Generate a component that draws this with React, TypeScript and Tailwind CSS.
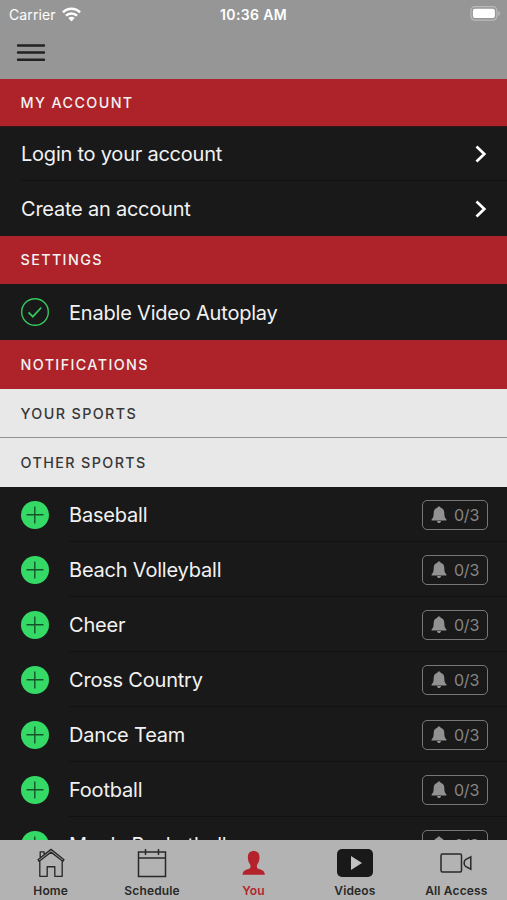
import React from "react";

const sports = [
  "Baseball",
  "Beach Volleyball",
  "Cheer",
  "Cross Country",
  "Dance Team",
  "Football",
  "Men's Basketball",
];

function Chevron() {
  return (
    <svg width="12" height="18" viewBox="0 0 12 18" fill="none" stroke="#fff" strokeWidth="2.7">
      <path d="M1.500 1.500 9.300 9 1.500 16.500" />
    </svg>
  );
}

function Bell() {
  return (
    <svg width="16" height="18" viewBox="0 0 16 18" fill="#929292">
      <path d="M8 .6c.9 0 1.500.5 1.600 1.200 2.400.7 3.700 2.500 3.700 5.200 0 3.700.6 4.900 2.100 6.200v1.300H.6v-1.300c1.500-1.300 2.100-2.500 2.100-6.200 0-2.700 1.300-4.500 3.700-5.200C6.500 1.100 7.100.6 8 .6ZM6 15h4c-.2 1.400-1 2-2 2s-1.800-.6-2-2Z" />
    </svg>
  );
}

function SectionHeader({ title, className }: { title: string; className: string }) {
  return (
    <h2 className={"flex shrink-0 items-center pl-[20.5px] text-[14.3px] font-medium tracking-[1.4px] " + className}>
      {title}
    </h2>
  );
}

function SportRow({ name }: { name: string }) {
  return (
    <div className="flex h-[55px] shrink-0 pl-[21px]">
      <svg className="mt-[14px] shrink-0" width="28" height="28" viewBox="0 0 28 28">
        <circle cx="14" cy="14" r="14" fill="#35da66" />
        <path d="M5.500 13.800h17M13.800 5.500v17" stroke="#15532a" strokeWidth="1.400" />
      </svg>
      <div className="ml-[20px] flex flex-1 items-center border-b border-[#121212] pt-[2px] pr-[19px]">
        <span className="flex-1 text-[20px] tracking-[-0.2px]">{name}</span>
        <span className="flex h-[30px] w-[66px] items-center justify-center gap-[7px] rounded-[5px] border-[1.5px] border-[#777] text-[16px] tracking-[-0.2px] text-[#858585]">
          <Bell />
          0/3
        </span>
      </div>
    </div>
  );
}

function Tab({ label, active, children }: { label: string; active?: boolean; children: React.ReactNode }) {
  return (
    <div className={"flex flex-1 flex-col items-center pt-[7px] " + (active ? "text-[#b4232b]" : "text-[#282828]")}>
      <div className="flex h-[32px] items-center justify-center">{children}</div>
      <span className="mt-[3px] text-[12px] leading-[18px] font-semibold tracking-[0.15px] whitespace-nowrap">{label}</span>
    </div>
  );
}

export default function App() {
  return (
    <div className="flex h-[900px] w-[507px] flex-col overflow-hidden bg-[#191919] font-['Inter','Liberation_Sans',sans-serif] text-[#f2f2f2]">
      <header className="flex h-[79px] shrink-0 flex-col bg-[#969696]">
        <div className="grid h-[28px] grid-cols-3 items-center text-[14px] text-white">
          <div className="flex items-center gap-[6px] pl-[9px]">
            <span className="tracking-[0.1px]">Carrier</span>
            <svg width="19" height="15" viewBox="0 0 19 15" fill="none" stroke="#fff" strokeWidth="2.600">
              <path d="M1 5.300a12 12 0 0 1 17 0M4 8.700a7.800 7.800 0 0 1 11 0" />
              <path d="M6.300 11a4.600 4.600 0 0 1 6.400 0L9.500 14.400Z" fill="#fff" stroke="none" />
            </svg>
          </div>
          <span className="text-center font-semibold tracking-[0.35px]">10:36 AM</span>
          <div className="flex justify-end pr-[6px] pb-[2px]">
            <svg width="31" height="15" viewBox="0 0 31 15">
              <rect x=".9" y=".7" width="26" height="13.400" rx="4" fill="none" stroke="#bababa" strokeWidth="1.300" />
              <rect x="2.900" y="2.700" width="22" height="9.400" rx="2" fill="#fff" />
              <path d="M28.300 5v5c2.300-1 2.300-4 0-5Z" fill="#bababa" />
            </svg>
          </div>
        </div>
        <svg className="mt-[15px] ml-[16px]" width="30" height="20" viewBox="0 0 30 20" stroke="#222" strokeWidth="2.400" strokeLinecap="round">
          <path d="M2 2.500h26M2 9.500h26M2 16.800h26" />
        </svg>
      </header>

      <main className="flex min-h-0 flex-1 flex-col overflow-hidden">
        <SectionHeader title="MY ACCOUNT" className="h-[48px] border-b border-[#351317] bg-[#ad2329]" />
        <div className="flex shrink-0 flex-col pl-[21px] text-[20px] tracking-[-0.23px]">
          <div className="flex h-[54px] items-center justify-between border-b border-[#121212] pt-[1px] pr-[20px]">
            Login to your account
            <Chevron />
          </div>
          <div className="flex h-[55px] items-center justify-between pr-[20px]">
            Create an account
            <Chevron />
          </div>
        </div>
        <SectionHeader title="SETTINGS" className="h-[48px] bg-[#ad2329]" />
        <div className="flex h-[56px] shrink-0 items-center pl-[21px]">
          <svg width="28" height="28" viewBox="0 0 28 28" fill="none" stroke="#35c85f" strokeWidth="1.400">
            <circle cx="14" cy="14" r="13.300" />
            <path d="m7.500 14.300 4.300 4.400 8.500-9.200" strokeWidth="1.700" />
          </svg>
          <span className="ml-[20px] pt-[1px] text-[20px] tracking-[-0.2px]">Enable Video Autoplay</span>
        </div>
        <SectionHeader title="NOTIFICATIONS" className="h-[49px] bg-[#ad2329]" />
        <SectionHeader title="YOUR SPORTS" className="h-[49px] border-b border-[#929292] bg-[#e8e8e8] pt-[1px] text-[#383838]" />
        <SectionHeader title="OTHER SPORTS" className="h-[49px] bg-[#e8e8e8] text-[#383838]" />
        {sports.map((name) => (
          <SportRow key={name} name={name} />
        ))}
      </main>

      <nav className="flex h-[60px] shrink-0 bg-[#b3b3b3]">
        <Tab label="Home">
          <svg width="28" height="30" viewBox="0 0 28 30" fill="none" stroke="currentColor" strokeWidth="1.350" strokeLinejoin="round">
            <path d="M1 11.700 14 1.400l13 10.300-1.200 1.600L14 4.100 2.200 13.300ZM3.200 9.900V3.800h3.900v3M2.800 13v15.300h7.400V18.700h7.600v9.600h7.400V13" />
          </svg>
        </Tab>
        <Tab label="Schedule">
          <svg width="30" height="30" viewBox="0 0 30 30" fill="none" stroke="currentColor" strokeWidth="1.500">
            <path d="M1.500 4h27v24.500h-27ZM1.500 10h27M8.500 1v6M21.500 1v6" />
          </svg>
        </Tab>
        <Tab label="You" active>
          <svg width="26" height="26" viewBox="0 0 26 26" fill="currentColor">
            <path d="M12.700 1c4 0 6 2.500 5.800 6.500 0 3-.8 5.200-2.300 6.900-.5 1.500-.4 3.500.7 4.200 2.500 1.500 6.500 1 7 6.200H1.500c.5-5.200 4.500-4.700 7-6.200 1.100-.7 1.200-2.700.7-4.200-1.500-1.700-2.300-3.900-2.300-6.900C6.700 3.500 8.700 1 12.700 1Z" />
          </svg>
        </Tab>
        <Tab label="Videos">
          <svg width="36" height="28" viewBox="0 0 36 28">
            <rect width="36" height="28" rx="5" fill="#191919" />
            <path d="M14 7v14l11-7Z" fill="#c2c2c2" />
          </svg>
        </Tab>
        <Tab label="All Access">
          <svg width="32" height="20" viewBox="0 0 32 20" fill="none" stroke="currentColor" strokeWidth="1.500">
            <rect x="1" y="1" width="20.500" height="18" rx="1.500" />
            <path d="m30.800 3.800-5.300 2.800c-1.800 1.200-1.800 5.600 0 6.800l5.300 2.800Z" />
          </svg>
        </Tab>
      </nav>
    </div>
  );
}
